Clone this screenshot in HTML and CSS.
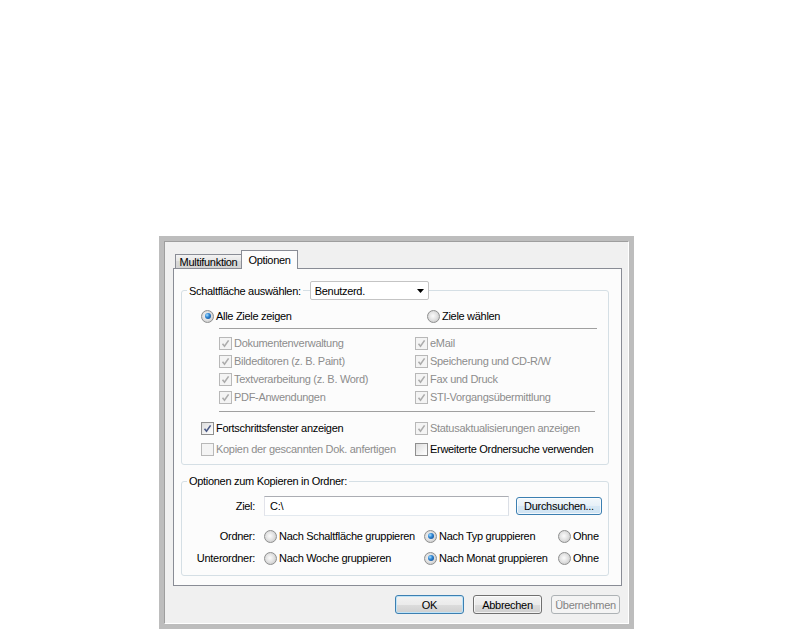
FILE: index.html
```html
<!DOCTYPE html>
<html lang="de">
<head>
<meta charset="utf-8">
<title>Optionen</title>
<link rel="stylesheet" href="styles.css">
</head>
<body>
<div class="dialog">
  <div class="inner">
    <div class="tabs">
      <div class="tab">Multifunktion</div>
      <div class="tab active">Optionen</div>
    </div>
    <div class="panel">
      <div class="group g1">
        <div class="ghead">
          <span class="legend">Schaltfläche auswählen:</span>
          <div class="select"><span>Benutzerd.</span><svg class="arrow" width="7" height="4" viewBox="0 0 7 4"><path d="M0 0H7L3.5 4Z" fill="#000"/></svg></div>
        </div>
        <div class="cols first">
          <div class="item"><span class="radio on"></span><span>Alle Ziele zeigen</span></div>
          <div class="item shift"><span class="radio"></span><span>Ziele wählen</span></div>
        </div>
        <div class="sep"></div>
        <div class="cols sub">
          <div class="item dis"><span class="cb dis"><svg viewBox="0 0 11 11"><path d="M2.5 5.8L4.5 8.2L8.6 2.4"/></svg></span><span>Dokumentenverwaltung</span></div>
          <div class="item dis"><span class="cb dis"><svg viewBox="0 0 11 11"><path d="M2.5 5.8L4.5 8.2L8.6 2.4"/></svg></span><span>eMail</span></div>
          <div class="item dis"><span class="cb dis"><svg viewBox="0 0 11 11"><path d="M2.5 5.8L4.5 8.2L8.6 2.4"/></svg></span><span>Bildeditoren (z. B. Paint)</span></div>
          <div class="item dis"><span class="cb dis"><svg viewBox="0 0 11 11"><path d="M2.5 5.8L4.5 8.2L8.6 2.4"/></svg></span><span>Speicherung und CD-R/W</span></div>
          <div class="item dis"><span class="cb dis"><svg viewBox="0 0 11 11"><path d="M2.5 5.8L4.5 8.2L8.6 2.4"/></svg></span><span>Textverarbeitung (z. B. Word)</span></div>
          <div class="item dis"><span class="cb dis"><svg viewBox="0 0 11 11"><path d="M2.5 5.8L4.5 8.2L8.6 2.4"/></svg></span><span>Fax und Druck</span></div>
          <div class="item dis"><span class="cb dis"><svg viewBox="0 0 11 11"><path d="M2.5 5.8L4.5 8.2L8.6 2.4"/></svg></span><span>PDF-Anwendungen</span></div>
          <div class="item dis"><span class="cb dis"><svg viewBox="0 0 11 11"><path d="M2.5 5.8L4.5 8.2L8.6 2.4"/></svg></span><span>STI-Vorgangsübermittlung</span></div>
        </div>
        <div class="sep sep2"></div>
        <div class="cols last">
          <div class="item"><span class="cb"><svg viewBox="0 0 11 11"><path d="M2.5 5.8L4.5 8.2L8.6 2.4"/></svg></span><span>Fortschrittsfenster anzeigen</span></div>
          <div class="item dis"><span class="cb dis"><svg viewBox="0 0 11 11"><path d="M2.5 5.8L4.5 8.2L8.6 2.4"/></svg></span><span>Statusaktualisierungen anzeigen</span></div>
          <div class="item dis"><span class="cb dis empty"></span><span>Kopien der gescannten Dok. anfertigen</span></div>
          <div class="item"><span class="cb"></span><span>Erweiterte Ordnersuche verwenden</span></div>
        </div>
      </div>
      <div class="group g2">
        <div class="ghead small">
          <span class="legend">Optionen zum Kopieren in Ordner:</span>
        </div>
        <div class="zrow">
          <span class="lbl">Ziel:</span>
          <div class="input">C:\</div>
          <div class="btn browse">Durchsuchen...</div>
        </div>
        <div class="orow o1">
          <span class="lbl">Ordner:</span>
          <div class="item"><span class="radio"></span><span>Nach Schaltfläche gruppieren</span></div>
          <div class="item"><span class="radio on"></span><span>Nach Typ gruppieren</span></div>
          <div class="item"><span class="radio"></span><span>Ohne</span></div>
        </div>
        <div class="orow o2">
          <span class="lbl">Unterordner:</span>
          <div class="item"><span class="radio"></span><span>Nach Woche gruppieren</span></div>
          <div class="item"><span class="radio on"></span><span>Nach Monat gruppieren</span></div>
          <div class="item"><span class="radio"></span><span>Ohne</span></div>
        </div>
      </div>
    </div>
    <div class="buttons">
      <div class="btn def">OK</div>
      <div class="btn">Abbrechen</div>
      <div class="btn off">Übernehmen</div>
    </div>
  </div>
</div>
</body>
</html>
```
FILE: styles.css
```css
html, body {
  margin: 0;
  background: #fff;
}
body {
  font-family: "Liberation Sans", Arial, sans-serif;
  font-size: 11px;
  letter-spacing: -0.3px;
  color: #000;
  overflow: hidden;
}
.dialog {
  margin: 236px 0 0 159px;
  width: 475px;
  height: 393px;
  box-sizing: border-box;
  border: 5px solid #bdbdbd;
}
.inner {
  height: 100%;
  box-sizing: border-box;
  border: 1px solid;
  border-color: #9e9e9e #fff #fff #9e9e9e;
  background: #f0f0f0;
  padding: 8px 6px 0 8px;
}
.tabs {
  display: flex;
  align-items: flex-end;
  height: 18px;
  padding-left: 2px;
}
.tab {
  box-sizing: border-box;
  height: 14px;
  width: 67px;
  border: 1px solid #898c95;
  border-bottom: none;
  background: linear-gradient(#f3f3f3, #e4e4e4 50%, #d9d9d9 50%, #d3d3d3);
  display: flex;
  align-items: center;
  justify-content: center;
  line-height: 12px;
  padding-top: 1px;
}
.tab.active {
  position: relative;
  z-index: 1;
  height: 19px;
  width: 57px;
  margin-left: -1px;
  margin-bottom: -1px;
  background: #fcfcfc;
  padding-top: 0;
  padding-bottom: 1px;
}
.panel {
  width: 449px;
  height: 318px;
  box-sizing: border-box;
  border: 1px solid #898c95;
  background: #fcfcfc;
  padding: 21px 0 0 7px;
}
.group {
  width: 428px;
  box-sizing: border-box;
  border: 1px solid #d5dfe5;
  border-radius: 3px;
}
.g1 { height: 175px; }
.g2 { height: 95px; margin-top: 16px; }
.ghead {
  display: flex;
  align-items: center;
  height: 19px;
  margin-top: -10px;
  padding-left: 5px;
}
.ghead.small {
  height: 14px;
  margin-top: -8px;
}
.legend {
  background: #fcfcfc;
  padding: 0 2px;
  white-space: nowrap;
}
.select {
  margin-left: 7px;
  width: 119px;
  height: 19px;
  box-sizing: border-box;
  border: 1px solid #c4c4c4;
  border-radius: 2px;
  background: #fff;
  display: flex;
  align-items: center;
  justify-content: space-between;
  padding: 0 4px 0 4px;
}
.arrow { display: block; }
.cols {
  display: grid;
  grid-template-columns: 214px 1fr;
  padding-left: 19px;
}
.cols.first { margin-top: 7px; }
.cols.sub { margin-top: 5px; padding-left: 37px; grid-template-columns: 196px 1fr; }
.cols.last { margin-top: 7px; row-gap: 3px; }
.item {
  display: flex;
  align-items: center;
  height: 18px;
  gap: 2px;
  white-space: nowrap;
}
.item.shift { padding-left: 12px; }
.item.dis { color: #8d8d8d; }
.sep {
  height: 1px;
  background: #a0a0a0;
  margin: 3px 0 0 37px;
  width: 378px;
}
.sep2 { margin-top: 5px; width: 376px; }
.radio {
  position: relative;
  flex: none;
  width: 13px;
  height: 13px;
  box-sizing: border-box;
  border-radius: 50%;
  border: 1px solid #8e8f8f;
  background: radial-gradient(circle at 45% 45%, #fbfbfb 0, #e3e3e3 45%, #cfcfcf 75%, #ececec 100%);
}
.radio.on::after {
  content: "";
  position: absolute;
  left: 2.5px;
  top: 2.5px;
  width: 6px;
  height: 6px;
  border-radius: 50%;
  background: radial-gradient(circle at 35% 35%, #a8e0ff 0, #2f86d4 40%, #0d3f80 100%);
}
.cb {
  position: relative;
  flex: none;
  width: 13px;
  height: 13px;
  box-sizing: border-box;
  border: 1px solid #8f8f8f;
  background: linear-gradient(135deg, #dcdcdc, #f6f6f6 70%, #fff);
}
.cb svg {
  display: block;
  width: 11px;
  height: 11px;
}
.cb svg path {
  fill: none;
  stroke: #4b5a86;
  stroke-width: 1.6;
}
.cb.dis {
  border-color: #b8b8b8;
  background: #f4f4f4;
}
.cb.dis svg path { stroke: #acacac; }
.g2 .lbl {
  width: 73px;
  text-align: right;
  flex: none;
  margin-right: 9px;
}
.zrow {
  display: flex;
  align-items: center;
  height: 20px;
  margin-top: 8px;
}
.input {
  width: 245px;
  height: 20px;
  box-sizing: border-box;
  border: 1px solid #abadb3;
  border-color: #abadb3 #dbdfe6 #e3e9ef #e2e3ea;
  background: #fff;
  padding-left: 5px;
  line-height: 18px;
}
.btn {
  box-sizing: border-box;
  width: 69px;
  height: 19px;
  border: 1px solid #707070;
  border-radius: 3px;
  background: linear-gradient(#f2f2f2, #ebebeb 50%, #dddddd 50%, #cfcfcf);
  box-shadow: inset 0 0 0 1px rgba(255,255,255,0.7);
  display: flex;
  align-items: center;
  justify-content: center;
  white-space: nowrap;
}
.btn.browse {
  width: 86px;
  height: 18px;
  margin-left: 7px;
  border-color: #3c7fb1;
  background: linear-gradient(#f3f8fc, #e6f0f8 50%, #d7e8f5 50%, #d0e4f3);
}
.orow {
  display: flex;
  align-items: center;
  height: 18px;
}
.o1 { margin-top: 11px; }
.o2 { margin-top: 4px; }
.orow .item:nth-of-type(1) { width: 160px; }
.orow .item:nth-of-type(2) { width: 134px; }
.buttons {
  display: flex;
  justify-content: flex-end;
  gap: 9px;
  margin-top: 9px;
  padding-right: 2px;
}
.btn.def {
  border-color: #3c7fb1;
  box-shadow: inset 0 0 0 1px #bfe3f7;
}
.btn.off {
  border-color: #adb2b5;
  background: #f4f4f4;
  box-shadow: none;
  color: #838383;
}
```
